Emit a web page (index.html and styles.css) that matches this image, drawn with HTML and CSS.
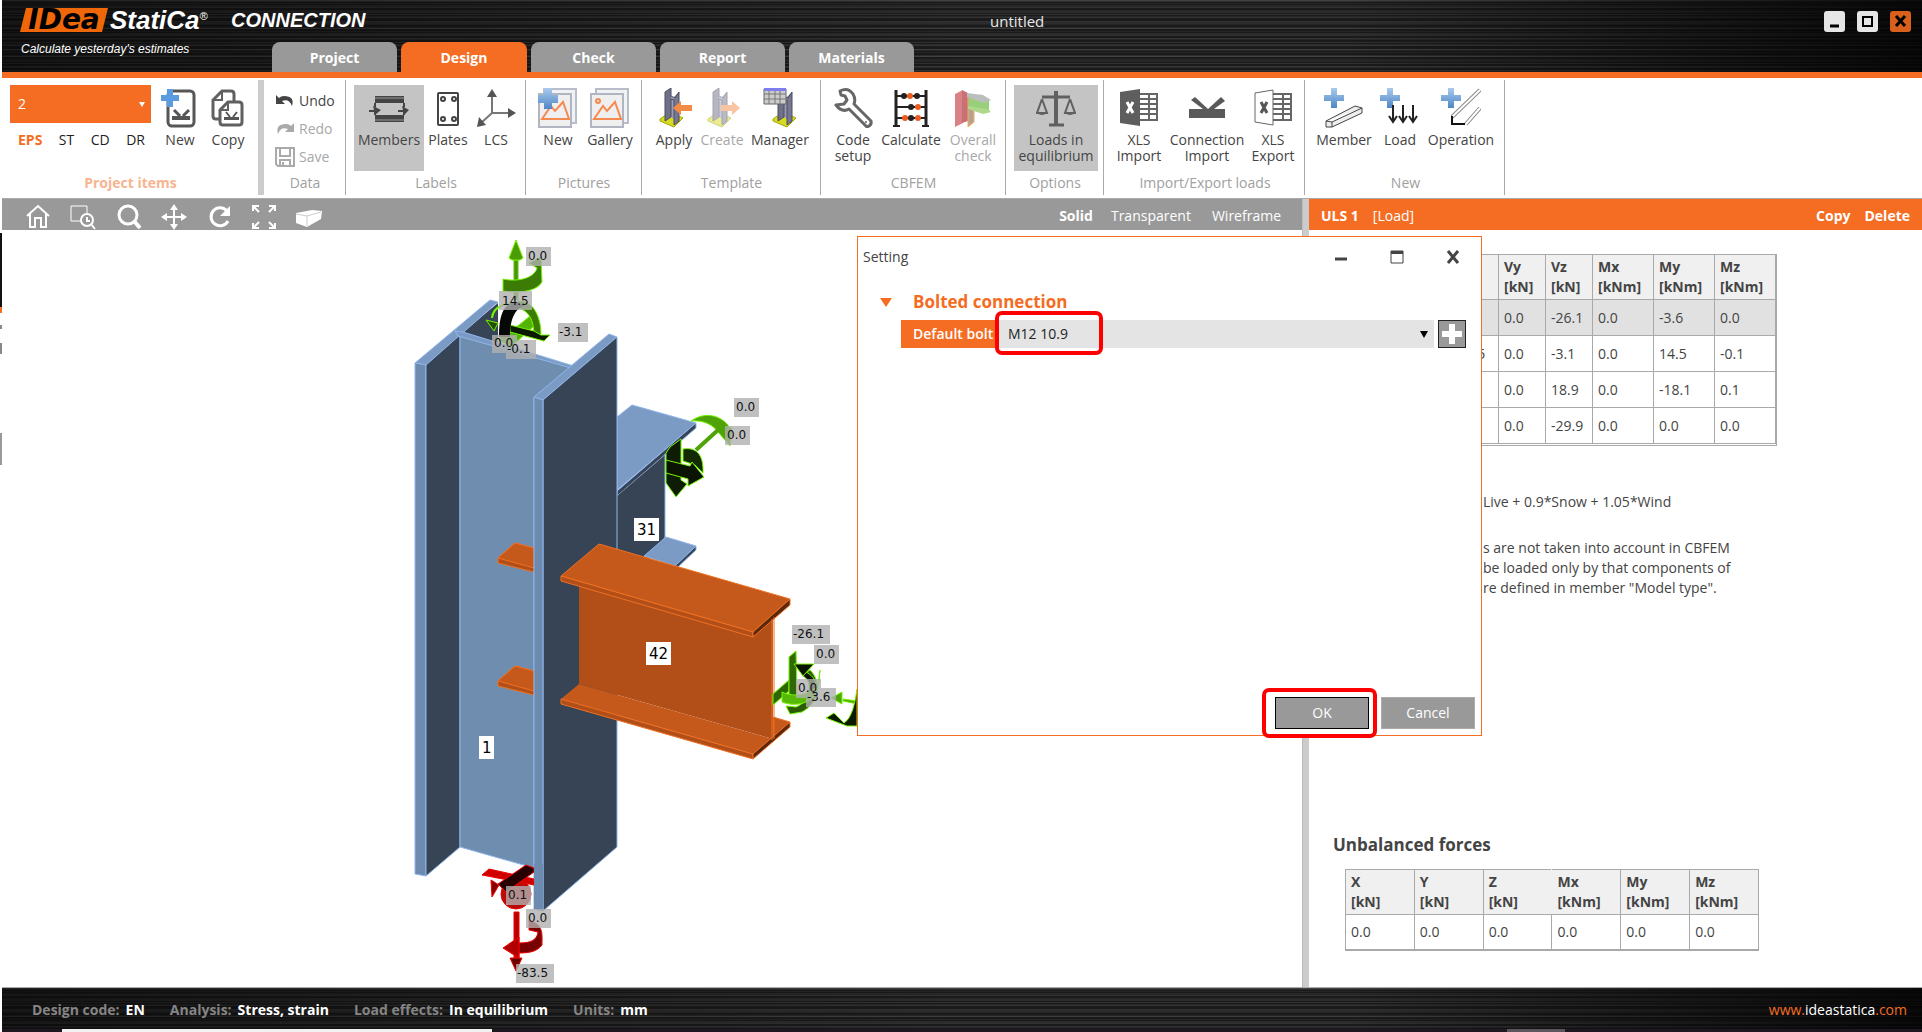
FILE: index.html
```html
<!DOCTYPE html>
<html lang="en">
<head>
<meta charset="utf-8">
<title>untitled</title>
<link rel="stylesheet" href="styles.css">
</head>
<body>
<svg class="defs" aria-hidden="true">
  <defs>
    <linearGradient id="plusFill" x1="0" y1="0" x2="0" y2="1"><stop offset="0" stop-color="#a9cbed"/><stop offset="1" stop-color="#4f86c6"/></linearGradient>
    <symbol id="plus" viewBox="0 0 20 20"><path d="M7 0h6v7h7v6h-7v7H7v-7H0V7h7z" fill="url(#plusFill)"/></symbol>
    <symbol id="photo" viewBox="0 0 40 40"><path d="M6 1h32v34H6z" fill="#f1f2f5" stroke="#b9bdc9" stroke-width="2"/><path d="M1 6h32v33H1z" fill="#efefef" stroke="#b1b5c2" stroke-width="2"/><path d="M4 31 13 18l4 5 8-9 6 17z" fill="none" stroke="#f58a50" stroke-width="2"/></symbol>
    <symbol id="column" viewBox="0 0 40 40"><path d="m6 31 10-7 13 6-9 9-14-6z" fill="#d8da22" stroke="#a5a800"/><path d="m11 4 6-4v29l-6 4z" fill="#6f7087"/><path d="m17 8 4 2v22l-4-3z" fill="#9c9db8"/><path d="m20 9 5-5v29l-5 4z" fill="#777890"/><path d="m11 4 6-4v8l4 2 4-6v29l-5 4V12l-3-1v18l-6 4z" fill="none" stroke="#4c4d62"/></symbol>
    <symbol id="sheet" viewBox="0 0 40 40"><path d="M20 6h18v26H20M20 11h18M20 16h18M20 21h18M20 26h18M30 6v26" fill="none" stroke="#666" stroke-width="2"/></symbol>
  </defs>
</svg>

<div class="app">
  <header class="top">
    <div class="brand">
      <div class="brand-row"><span class="logo"><span>IDea</span></span><span class="name">StatiCa<sup>®</sup></span><span class="product">CONNECTION</span></div>
      <div class="tagline">Calculate yesterday's estimates</div>
    </div>
    <nav class="tabs">
      <button>Project</button><button class="on">Design</button><button>Check</button><button>Report</button><button>Materials</button>
    </nav>
    <h1 class="doc">untitled</h1>
    <div class="winbtns">
      <button aria-label="Minimize"><svg viewBox="0 0 21 21"><path d="M6 15h9" stroke="#000" stroke-width="3"/></svg></button>
      <button aria-label="Maximize"><svg viewBox="0 0 21 21"><path d="M6 6h9v9H6z" fill="none" stroke="#000" stroke-width="2"/></svg></button>
      <button class="x" aria-label="Close"><svg viewBox="0 0 21 21"><path d="m6 5 9 10M15 5 6 15" stroke="#000" stroke-width="3"/></svg></button>
    </div>
  </header>

  <div class="ribbon">
    <section class="group items">
      <div class="row">
        <div class="chooser">
          <label class="combo"><select aria-label="Project item"><option>2</option></select></label>
          <div class="kinds"><button class="on">EPS</button><button>ST</button><button>CD</button><button>DR</button></div>
        </div>
        <button class="tool w48"><svg viewBox="0 0 40 40"><rect x="8" y="3" width="26" height="35" rx="4" fill="#fff" stroke="#565656" stroke-width="3"/><path d="m14 22 6 6M29 22l-6 6" stroke="#555" stroke-width="3"/><path d="M12 28h18v4H12z" fill="#555"/><path d="M7 1h6v6h6v6h-6v6H7v-6H1V7h6z" fill="#5a9ce0"/></svg>New</button>
        <button class="tool w48"><svg viewBox="0 0 40 40"><path d="M12 31H8q-3 0-3-3V12L14 3h9q3 0 3 3v7" fill="#fff" stroke="#606060" stroke-width="3"/><path d="M14 3v9H5" fill="none" stroke="#606060" stroke-width="2"/><path d="m12 22 8-8h11q3 0 3 3v17q0 3-3 3H15q-3 0-3-3z" fill="#fff" stroke="#606060" stroke-width="3"/><path d="M20 14v8h-8" fill="none" stroke="#606060" stroke-width="2"/><path d="m18 24 4 5M29 24l-4 5" stroke="#555" stroke-width="2"/><path d="M16 29h15v3H16z" fill="#555"/></svg>Copy</button>
      </div>
      <h2>Project items</h2>
    </section>
    <section class="group data">
      <div class="stack">
        <button><svg viewBox="0 0 20 16"><path d="M1 2v9h9L7 8q7-3 10 5 3-10-8-10-3 0-5 2z" fill="#444"/></svg>Undo</button>
        <button class="off"><svg viewBox="0 0 20 16"><path d="M19 2v9h-9l3-3Q6 5 3 13 0 3 11 3q3 0 5 2z" fill="#aaa"/></svg>Redo</button>
        <button class="off"><svg viewBox="0 0 20 20"><path d="M1 1h18v18H3l-2-2zM5 1v8h10V1M5 19v-6h10v6M8 15v4" fill="none" stroke="#aaa" stroke-width="2"/></svg>Save</button>
      </div>
      <h2>Data</h2>
    </section>
    <section class="group labels">
      <div class="row">
        <button class="tool w70 pressed"><svg viewBox="0 0 40 40"><path d="M6 8h29v7H6zM6 27h29v7H6z" fill="#444"/><path d="M6 10h29M6 32h29" stroke="#999"/><path d="M6 15v4M6 27v-5M35 15v4M35 27v-5" stroke="#444" stroke-width="2"/><path d="M0 22h5l-1-4 8 4-6 5 0-3-6 0zM29 22h5l-1-4 7 4-5 5 0-3-6 0z" fill="#444"/></svg>Members</button>
        <button class="tool w48"><svg viewBox="0 0 40 40"><rect x="10" y="5" width="20" height="32" rx="1" fill="#fff" stroke="#444" stroke-width="2"/><g fill="none" stroke="#444" stroke-width="2"><circle cx="15" cy="11" r="2"/><circle cx="26" cy="11" r="2"/><circle cx="15" cy="31" r="2"/><circle cx="26" cy="31" r="2"/></g></svg>Plates</button>
        <button class="tool w48"><svg viewBox="0 0 40 40"><path d="M16 6v19h17M16 25 5 35" fill="none" stroke="#777" stroke-width="2"/><path d="m16 1 5 8H11zM40 25l-8 5V20zM1 39l2-10 7 8z" fill="#555"/></svg>LCS</button>
      </div>
      <h2>Labels</h2>
    </section>
    <section class="group pictures">
      <div class="row">
        <button class="tool w48"><svg viewBox="0 0 40 40"><use href="#photo"/><path d="M6 0h8v7h6v8h-6v6H6v-6H0V7h6z" fill="url(#plusFill)"/></svg>New</button>
        <button class="tool w56"><svg viewBox="0 0 40 40"><use href="#photo"/><circle cx="8" cy="13" r="2" fill="none" stroke="#f58a50" stroke-width="2"/></svg>Gallery</button>
      </div>
      <h2>Pictures</h2>
    </section>
    <section class="group template">
      <div class="row">
        <button class="tool w48"><svg viewBox="0 0 40 40"><use href="#column"/><path d="m19 20 8-7v4h11v6H27v4z" fill="#f28b45"/></svg>Apply</button>
        <button class="tool w48 off"><svg class="faded" viewBox="0 0 40 40"><use href="#column"/><path d="m38 20-8-7v4H19v6h11v4z" fill="#f28b45"/></svg>Create</button>
        <button class="tool w68"><svg viewBox="0 0 40 40"><use href="#column" x="7"/><path d="M4 1h22v15H4z" fill="#ccc" stroke="#666"/><path d="M4 6h22M4 11h22M9 3v13M15 3v13M20 3v13" stroke="#777"/><path d="M4 0h22v3H4z" fill="#7e7ef0"/></svg>Manager</button>
      </div>
      <h2>Template</h2>
    </section>
    <section class="group cbfem">
      <div class="row">
        <button class="tool w48"><svg viewBox="0 0 40 40"><path d="M7 3q8-4 13 3 3 5 1 10l17 17q1 4-4 6L16 21q-7 4-13-4l8-1 3-4-2-4-4-1z" fill="#fff" stroke="#666" stroke-width="3" stroke-linejoin="round"/><circle cx="33" cy="34" r="1" fill="#666"/></svg>Code<br>setup</button>
        <button class="tool w68"><svg viewBox="0 0 40 40"><path d="M5 2v36M35 2v36" stroke="#222" stroke-width="3"/><path d="M2 38h7M31 38h7M5 8h30M5 19h30M5 30h30" stroke="#222" stroke-width="2"/><g fill="#222"><circle cx="13" cy="8" r="3"/><circle cx="26" cy="8" r="3"/><circle cx="20" cy="19" r="3"/><circle cx="20" cy="30" r="3"/></g><g fill="#ee5b1e"><circle cx="19" cy="8" r="3"/><circle cx="27" cy="19" r="3"/><circle cx="14" cy="30" r="3"/><circle cx="27" cy="30" r="3"/></g></svg>Calculate</button>
        <button class="tool w56 off"><svg viewBox="0 0 40 40"><path d="m2 6 8-4v33l-8 4z" fill="#d98186"/><path d="m9 2 6 3v28l-6 2z" fill="#c96f76"/><path d="m15 8 6 3v23l-6 5z" fill="#b7a091" stroke="#e8b25c"/><path d="m16 10 15 4 5-2v10l-5 3-15-6z" fill="#98cf7b"/><path d="m14 5 16 2 8 5-7 3-17-6z" fill="#b9bfbd"/><path d="m15 18 20 3 3 3-8 2-15-5z" fill="#add88a"/></svg>Overall<br>check</button>
      </div>
      <h2>CBFEM</h2>
    </section>
    <section class="group options">
      <div class="row">
        <button class="tool w84 pressed"><svg viewBox="0 0 40 40"><path d="M20 3v34" stroke="#606060" stroke-width="4"/><path d="M6 9h28M13 37h15" stroke="#606060" stroke-width="3"/><path d="m6 11-5 14h10L6 11M34 11l-5 14h10l-5-14" fill="none" stroke="#606060" stroke-width="2"/><path d="M1 25h10q-5 4-10 0M29 25h10q-5 4-10 0" fill="#606060"/></svg>Loads in<br>equilibrium</button>
      </div>
      <h2>Options</h2>
    </section>
    <section class="group transfer">
      <div class="row">
        <button class="tool w52"><svg viewBox="0 0 40 40"><use href="#sheet"/><path d="m1 4 20-3v37L1 35z" fill="#5e5e5e"/><path d="m8 14 6 11M14 14 8 25" stroke="#fff" stroke-width="3"/></svg>XLS<br>Import</button>
        <button class="tool w84"><svg viewBox="0 0 40 40"><path d="M2 21h14L4 12l4-3 13 12L34 9l4 4-11 8h11v9H2z" fill="#595959"/></svg>Connection<br>Import</button>
        <button class="tool w48"><svg viewBox="0 0 40 40"><use href="#sheet"/><path d="m2 5 18-3v35L2 34z" fill="#fff" stroke="#666"/><path d="m8 14 6 11M14 14 8 25" stroke="#555" stroke-width="3"/></svg>XLS<br>Export</button>
      </div>
      <h2>Import/Export loads</h2>
    </section>
    <section class="group create">
      <div class="row">
        <button class="tool w60"><svg viewBox="0 0 40 40"><use href="#plus" width="20" height="20"/><path d="m2 33 29-15 7 2v5L8 39H2zM2 33l6 1 30-14M8 34v5" fill="#eee" stroke="#444"/></svg>Member</button>
        <button class="tool w52"><svg viewBox="0 0 40 40"><use href="#plus" width="20" height="20"/><path d="M13 17v17M23 17v17M33 17v17M9 28l4 6 4-6M19 28l4 6 4-6M29 28l4 6 4-6" fill="none" stroke="#222" stroke-width="2"/></svg>Load</button>
        <button class="tool w70"><svg viewBox="0 0 40 40"><use href="#plus" width="20" height="20"/><path d="M39 2 11 29M39 20 25 36" stroke="#888" stroke-width="4"/><path d="M39 2 11 29M39 20 25 36" stroke="#fff" stroke-width="2"/><path d="M11 28v8h13" fill="none" stroke="#111" stroke-width="2"/></svg>Operation</button>
      </div>
      <h2>New</h2>
    </section>
  </div>

  <main class="work">
    <section class="scene">
      <div class="viewbar">
        <div class="viewtools">
          <button aria-label="Home"><svg viewBox="0 0 28 28"><path d="m3 14 11-10 11 10M6 12v13h5v-9h6v9h5V12" fill="none" stroke="#fff" stroke-width="2"/></svg></button>
          <button aria-label="Zoom window"><svg viewBox="0 0 28 28"><path d="M12 19H2V4h16v7" fill="none" stroke="#fff" stroke-width="1"/><circle cx="18" cy="18" r="6" fill="none" stroke="#fff" stroke-width="2"/><path d="m22 22 4 5M18 15v4h3" fill="none" stroke="#fff" stroke-width="2"/></svg></button>
          <button aria-label="Zoom"><svg viewBox="0 0 28 28"><circle cx="14" cy="13" r="9" fill="none" stroke="#fff" stroke-width="3"/><path d="m20 19 6 7" stroke="#fff" stroke-width="4"/></svg></button>
          <button aria-label="Pan"><svg viewBox="0 0 28 28"><path d="M15 5v19M6 15h18" stroke="#fff" stroke-width="2"/><path d="m15 2 4 6h-8zM15 28l4-6h-8zM2 15l6-4v8zM28 15l-6-4v8z" fill="#fff"/></svg></button>
          <button aria-label="Rotate"><svg viewBox="0 0 28 28"><path d="M23 9a9 9 0 1 0 1 10" fill="none" stroke="#fff" stroke-width="3"/><path d="M26 4v10H16z" fill="#fff"/></svg></button>
          <button aria-label="Fit"><svg viewBox="0 0 28 28"><path d="M4 9V4h6M4 4l6 6M26 9V4h-6M26 4l-6 6M4 21v5h6M4 26l6-6M26 21v5h-6M26 26l-6-6" fill="none" stroke="#fff" stroke-width="2"/></svg></button>
          <button aria-label="Solid view"><svg viewBox="0 0 28 28"><path d="m2 11 16-3 10 1-1 8-14 8-11-4z" fill="#fff"/><path d="m2 12 11 2v10M13 14l14-4" fill="none" stroke="#ccc"/></svg></button>
        </div>
        <div class="modes"><button class="on">Solid</button><button>Transparent</button><button>Wireframe</button></div>
      </div>
      <svg class="model" viewBox="2 230 1300 757" role="img" aria-label="3D model of the joint">
        <g stroke="#8fb5ea" stroke-linejoin="round">
          <path d="m460 334 38-31v60l-38-20z" fill="#364456" stroke="none"/>
          <path d="m415 363 75-63 8 2-72 63z" fill="#7b9bc4"/>
          <path d="m415 363 11 2v511l-11-2z" fill="#6c8baf"/>
          <path d="m426 365 34-30v512l-34 29z" fill="#364456"/>
          <path d="m460 336 118 32-44 30v470l-74-21z" fill="#6f8daf"/>
          <path d="m455 331 8 1 114 35-6 1-113-32z" fill="#7b9bc4"/>
          <path d="m534 397 75-63 8 3-74 63z" fill="#7b9bc4"/>
          <path d="m617 417 15-12 64 18-79 67z" fill="#7b9bc4"/>
          <path d="m617 491 79-68v5l-79 68z" fill="#364456"/>
          <path d="m617 496 48-41v82l-30 43h-18z" fill="#364456" stroke="none"/>
          <path d="M665 454v83" fill="none"/>
          <path d="m644 556 22-19 30 9-21 20z" fill="#7b9bc4"/>
          <path d="m675 566 21-20v4l-18 17z" fill="#364456"/>
        </g>
        <g stroke="#f07022" stroke-linejoin="round">
          <path d="m498 558 17-15 19 5v24l-36-9z" fill="#b24f18"/><path d="m498 558 17-15 19 5v20z" fill="#c5591b"/>
          <path d="m498 681 17-15 19 5v24l-36-9z" fill="#b24f18"/><path d="m498 681 17-15 19 5v20z" fill="#c5591b"/>
        </g>
        <g stroke="#8fb5ea" stroke-linejoin="round">
          <path d="m543 400 74-63v510l-74 64z" fill="#364456"/>
          <path d="m534 397 9 3v511l-9-2z" fill="#6c8baf"/>
        </g>
        <g stroke="#f07022" stroke-linejoin="round">
          <path d="m773 717 17 5-17 17z" fill="#c5591b"/>
          <path d="M579 580v104l194 55V610z" fill="#b24f18" stroke="none"/>
          <path d="m561 699 18-15 194 55-20 15z" fill="#c5591b" stroke="none"/>
          <path d="m561 699 192 55v5l-192-55z" fill="#b24f18"/>
          <path d="m753 754 37-32v5l-37 32z" fill="#5a280c"/>
          <path d="m561 576 38-32 191 55-37 33z" fill="#c5591b"/>
          <path d="m561 576 192 56v5l-192-56z" fill="#b24f18"/>
          <path d="m753 632 37-33v6l-37 32z" fill="#5a280c"/>
          <path d="M772 619v121M774 617v122" fill="none"/>
        </g>
        <g stroke="#74f500" stroke-linejoin="round">
          <path d="M514 260h4v40h-4z" fill="#4b9605" stroke="#5ec000"/>
          <path d="m516 240 7 18-3 2h-8l-3-2z" fill="#4c9c08"/>
          <path d="M503 279c13 3 31 0 34-11l-8-5 12-6 1 25c-6 11-28 11-39 9z" fill="#3c7c05"/>
          <path d="m519 325 11-9 4 10-22 20-15-6z" fill="#54b406"/>
          <path d="M518 301c17-1 23 19 23 33l-7 2c0-21-9-26-16-28z" fill="#3c7c05"/>
          <path d="m486 320 12 3-4 8z" fill="#254d03"/><path d="M492 318c1-12 14-16 30-14" fill="none" stroke-width="2"/>
          <path d="m510 325 24 6 7 4 9 0-6 6-34-9z" fill="#0d1a02"/>
          <path d="M499 337c0-27 7-35 19-35l6 4c-12 4-14 19-14 31z" fill="#050805" stroke="none"/>
          <path d="M691 421c14-10 31-6 39 7l2-1-2 19-12-14c-6-8-15-12-27-11z" fill="#4fa308"/>
          <path d="m696 450 22-20" stroke="#4fa308" stroke-width="4"/>
          <path d="m670 447 11-8v41l6 4-11 13-10-14v-30z" fill="#0d1c02"/>
          <path d="M683 449c12-2 21 4 20 24l-8-8-12-4z" fill="#142a02"/>
          <path d="m666 460 24 6 2-4 12 15-16 9 0-7-22-6z" fill="#0b1403"/>
          <path d="m773 694 16-14v11l-16 14z" fill="#2e6604"/>
          <path d="m789 657 7-6 1 46h-8z" fill="#2f6804"/>
          <path d="m786 706 4 8 12-2c18-10 20-30 8-42l-6 4c9 10 7 27-8 33z" fill="#2b5b04"/>
          <path d="M806 672c12 6 11 17 8 25l-7-3c4-6 3-14-4-18z" fill="#0b1403"/>
          <path d="m794 664 20 0-11 12z" fill="#0b1403"/>
          <path d="M782 692c13 6 30 3 37-9l1-13-3 22c-8 14-25 14-35 10z" fill="#58b807"/>
          <path d="m831 698 11-6v12zM843 699l14 2v3l-14-3z" fill="#4fa308"/>
          <path d="m826 718 8-5 10 10c8-5 11-20 13-34v37l-10 0z" fill="#0d1a02"/>
        </g>
        <g stroke="#f00000" stroke-linejoin="round">
          <circle cx="516" cy="894" r="15" fill="#b80c0c"/>
          <path d="m482 875 7-6 45 10v6z" fill="#d00000"/><path d="m491 880 8 5-7 12z" fill="#800"/>
          <path d="m498 884 28-19 8 3v4l-28 20z" fill="#260000"/>
          <path d="M514 912h5v48h-5z" fill="#b40000"/><path d="m510 958h12l-6 13z" fill="#6b0000"/>
          <path d="M519 943c12 0 18-3 19-11l-9-2v-10c15 5 13 14 13 25-5 7-14 8-23 8z" fill="#700"/>
          <path d="m503 948 16-11v21z" fill="#b00000"/>
        </g>
        <path d="M534 864v45l9 2V864z" fill="#6c8baf"/>
        <g fill="#b0b0b0" fill-opacity=".8">
          <path d="M526 247h25v19h-25zM499 291h33v19h-33zM558 323h30v19h-30zM492 335h25v18h-25zM506 340h30v19h-30zM734 398h25v19h-25zM725 426h25v19h-25zM792 625h38v19h-38zM814 645h25v19h-25zM796 679h25v19h-25zM806 688h30v19h-30zM506 886h25v19h-25zM526 909h25v19h-25zM516 964h38v19h-38z"/>
        </g>
        <path d="M634 518h25v23h-25zM646 642h25v23h-25zM479 736h15v23h-15z" fill="#fff"/>
        <g class="force">
          <text x="528" y="260">0.0</text><text x="502" y="305">14.5</text><text x="559" y="336">-3.1</text><text x="494" y="347">0.0</text><text x="507" y="353">-0.1</text><text x="736" y="411">0.0</text><text x="727" y="439">0.0</text><text x="793" y="638">-26.1</text><text x="816" y="658">0.0</text><text x="798" y="692">0.0</text><text x="807" y="701">-3.6</text><text x="508" y="899">0.1</text><text x="528" y="922">0.0</text><text x="517" y="977">-83.5</text>
        </g>
        <g class="member"><text x="637" y="535">31</text><text x="649" y="659">42</text><text x="482" y="753">1</text></g>
      </svg>
    </section>
    <div class="splitter"></div>
    <aside class="panel">
      <div class="panelbar"><strong>ULS 1</strong><span>[Load]</span><button class="copy">Copy</button><button>Delete</button></div>
      <div class="panelbody">
        <div class="loads">
          <table>
            <thead><tr><th></th><th></th><th>Vy<br>[kN]</th><th>Vz<br>[kN]</th><th>Mx<br>[kNm]</th><th>My<br>[kNm]</th><th>Mz<br>[kNm]</th></tr></thead>
            <tbody>
              <tr class="sel"><td></td><td></td><td>0.0</td><td>-26.1</td><td>0.0</td><td>-3.6</td><td>0.0</td></tr>
              <tr><td></td><td>-83.5</td><td>0.0</td><td>-3.1</td><td>0.0</td><td>14.5</td><td>-0.1</td></tr>
              <tr><td></td><td></td><td>0.0</td><td>18.9</td><td>0.0</td><td>-18.1</td><td>0.1</td></tr>
              <tr><td></td><td></td><td>0.0</td><td>-29.9</td><td>0.0</td><td>0.0</td><td>0.0</td></tr>
            </tbody>
          </table>
        </div>
        <div class="notes">
          <p>Live + 0.9*Snow + 1.05*Wind</p>
          <p>s are not taken into account in CBFEM<br>be loaded only by that components of<br>re defined in member "Model type".</p>
        </div>
        <h3>Unbalanced forces</h3>
        <table class="sums">
          <thead><tr><th>X<br>[kN]</th><th>Y<br>[kN]</th><th class="open-end">Z<br>[kN]</th><th class="open-start">Mx<br>[kNm]</th><th>My<br>[kNm]</th><th>Mz<br>[kNm]</th></tr></thead>
          <tbody><tr><td>0.0</td><td>0.0</td><td>0.0</td><td>0.0</td><td>0.0</td><td>0.0</td></tr></tbody>
        </table>
      </div>
    </aside>
  </main>

  <footer class="status">
    <dl>
      <div><dt>Design code:</dt><dd>EN</dd></div>
      <div><dt>Analysis:</dt><dd>Stress, strain</dd></div>
      <div><dt>Load effects:</dt><dd>In equilibrium</dd></div>
      <div><dt>Units:</dt><dd>mm</dd></div>
    </dl>
    <a href="#">www.<span>ideastatica</span>.com</a>
  </footer>
  <div class="taskbar"><i class="light"></i><i class="gray"></i></div>
</div>

<div class="dialog" role="dialog" aria-label="Setting">
  <div class="titlebar"><span>Setting</span>
    <button aria-label="Minimize"><svg viewBox="0 0 16 16"><path d="M2 10h12" stroke="#444" stroke-width="3"/></svg></button>
    <button aria-label="Maximize"><svg viewBox="0 0 16 16"><path d="M2 2h12v12H2z" fill="none" stroke="#444"/><path d="M2 2h12v3H2z" fill="#444"/></svg></button>
    <button aria-label="Close"><svg viewBox="0 0 16 16"><path d="m3 2 10 12M13 2 3 14" stroke="#444" stroke-width="3"/></svg></button>
  </div>
  <div class="settings">
    <h2>Bolted connection</h2>
    <div class="field">
      <label for="bolt">Default bolt</label>
      <div class="select"><select id="bolt"><option>M12 10.9</option></select></div>
      <button aria-label="Add bolt"><svg viewBox="0 0 24 24"><path d="M9 2h6v7h7v6h-7v7H9v-7H2V9h7z" fill="#fff"/></svg></button>
    </div>
  </div>
  <div class="actions"><button class="ok">OK</button><button>Cancel</button></div>
  <div class="mark mark-bolt"></div>
  <div class="mark mark-ok"></div>
</div>
<div class="behind"></div>
</body>
</html>
```
FILE: styles.css
```css
* { box-sizing: border-box; }
body { margin: 0; font: 14px/16px "Open Sans", "Noto Sans", sans-serif; color: #444; background: #fff; }
button { border: 0; padding: 0; margin: 0; background: none; font: inherit; color: inherit; }
h1, h2, h3, p, dl, dd { margin: 0; }
h1, h2, h3 { font-weight: 400; font-size: 14px; }
svg { display: block; flex: none; }
.defs { position: absolute; width: 0; height: 0; }
.app { display: flex; flex-direction: column; min-height: 100vh; padding-left: 2px; }

/* brushed metal bars */
.top, .status {
  background-color: #1a1a1a;
  background-image:
    linear-gradient(90deg, rgba(0,0,0,.5), rgba(0,0,0,0) 50%, rgba(0,0,0,0) 70%, rgba(0,0,0,.8)),
    repeating-linear-gradient(180deg, rgba(255,255,255,.1) 0 1px, transparent 1px 3px, rgba(255,255,255,.05) 3px 4px, transparent 4px 7px),
    repeating-linear-gradient(180deg, rgba(255,255,255,.08) 0 2px, transparent 2px 5px, rgba(255,255,255,.06) 5px 7px, transparent 7px 11px);
}
.top { display: flex; height: 78px; border-bottom: 6px solid #f46d22; color: #fff; }
.brand { flex: none; width: 270px; padding: 6px 0 0 21px; white-space: nowrap; }
.brand-row { display: flex; align-items: center; height: 28px; font-family: "Liberation Sans", sans-serif; font-style: italic; }
.logo { flex: none; position: relative; width: 82px; height: 24px; color: #000; }
.logo::before { content: ""; position: absolute; inset: 0; background: #ef6708; transform: skewX(-14deg); }
.logo span { position: relative; display: block; text-align: center; font: italic bold 28px/24px "DejaVu Sans", sans-serif; }
.name { flex: none; width: 126px; padding-left: 5px; font-weight: bold; font-size: 26px; }
.name sup { font-size: 11px; font-weight: 400; vertical-align: 9px; line-height: 0; }
.product { font-size: 20px; font-weight: bold; }
.tagline { margin: 7px 0 0 -2px; font: italic 12px/16px "Liberation Sans", sans-serif; }
.tabs { display: flex; gap: 4px; align-items: flex-end; }
.tabs button { width: 125px; height: 30px; padding-top: 1px; border-radius: 8px 8px 0 0; background: #999; font-weight: 700; }
.tabs .on { background: #f46d22; width: 126px; }
.doc { margin: 12px auto 0 76px; color: #e8e8e8; line-height: 18px; font-size: 15px; }
.winbtns { display: flex; gap: 12px; padding: 11px 11px 0 0; }
.winbtns button { width: 21px; height: 21px; border-radius: 3px; background: #e6e6e6; }
.winbtns .x { background: #d9601c; }

.ribbon { display: flex; height: 121px; padding: 2px 0 3px; border-bottom: 1px solid #aaa; }
.group { display: flex; flex-direction: column; justify-content: space-between; padding: 5px 0 1px 8px; border-right: 1px solid #aaa; height: 115px; }
.group h2 { height: 20px; line-height: 18px; margin-left: -7px; text-align: center; color: #a0a0a0; }
.row { display: flex; }
.items { width: 262px; border-right: 6px solid #ccc; }
.items h2 { color: #f7b48f; font-weight: 700; }
.data { width: 82px; }
.labels { width: 180px; }
.pictures { width: 116px; }
.template { width: 179px; }
.cbfem { width: 185px; }
.options { width: 98px; }
.transfer { width: 201px; padding-left: 9px; }
.create { width: 200px; padding-left: 9px; }
.tool { display: flex; flex-direction: column; align-items: center; height: 86px; padding-top: 3px; white-space: nowrap; }
.tool svg { width: 40px; height: 40px; margin-bottom: 4px; }
.w48 { width: 48px; } .w52 { width: 52px; } .w56 { width: 56px; } .w60 { width: 60px; }
.w68 { width: 68px; } .w70 { width: 70px; } .w84 { width: 84px; }
.tool.pressed { background: #c4c4c4; }
.off { color: #a8a8a8; }
.faded { opacity: .5; }
.chooser { width: 141px; margin-right: 5px; }
.combo { position: relative; display: block; height: 38px; }
.combo select { width: 100%; height: 100%; padding-left: 8px; appearance: none; border: 0; background: #f46d22; color: #fff; font: inherit; }
.combo::after { content: ""; position: absolute; right: 6px; top: 17px; border: 3px solid transparent; border-top: 5px solid #fff; border-bottom: 0; }
.kinds { display: flex; justify-content: space-between; padding: 9px 6px 0 8px; color: #222; }
.kinds .on { color: #f46d22; font-weight: 700; }
.stack { display: flex; flex-direction: column; gap: 4px; padding-top: 4px; }
.stack button { display: flex; align-items: center; gap: 4px; height: 24px; padding-left: 3px; }
.stack svg { width: 20px; height: 20px; }

.work { display: flex; flex: 1; border-bottom: 1px solid #aaa; }
.scene { flex: 1; display: flex; flex-direction: column; min-width: 0; }
.viewbar { display: flex; justify-content: space-between; align-items: center; height: 31px; padding: 2px 21px 0 22px; background: #999; color: #fff; }
.viewtools { display: flex; gap: 17px; }
.viewtools svg { width: 28px; height: 28px; }
.modes { display: flex; gap: 18px; }
.modes button:last-child { margin-left: 3px; }
.modes .on { font-weight: 700; }
.model { width: 100%; flex: 1; min-height: 0; }
.force { font: 12px "DejaVu Sans", sans-serif; fill: #111; }
.member { font: 15px "DejaVu Sans", sans-serif; fill: #000; }
.splitter { width: 7px; background: #ccc; border-left: 1px solid #bbb; }
.panel { display: flex; flex-direction: column; flex: 0 0 613px; }
.panelbar { display: flex; align-items: center; height: 31px; padding: 2px 12px 0; background: #f46d22; color: #fff; gap: 14px; }
.panelbar button, .panelbar strong { font-weight: 700; }
.panelbar .copy { margin-left: auto; }
.panelbody { flex: 1; display: flex; flex-direction: column; align-items: flex-start; padding: 24px 25px 36px 24px; }
table { border-collapse: collapse; table-layout: fixed; }
th, td { border: 1px solid #a9a9a9; padding: 0 5px; text-align: left; white-space: nowrap; }
th { height: 45px; background: #f0f0f0; font-weight: 700; line-height: 20px; }
td { height: 36px; }
.sel td { background: #e1e1e1; }
.loads { margin-left: 12px; border: 1px solid #a9a9a9; border-width: 0 1px 1px 0; padding-bottom: 1px; }
.loads table { width: 431px; }
.loads th:nth-child(1) { width: 102px; }
.loads th:nth-child(2) { width: 51px; }
.loads th:nth-child(3), .loads th:nth-child(4) { width: 47px; }
.notes { padding: 46px 0 0 150px; line-height: 20px; }
.notes p + p { margin-top: 26px; }
.panelbody h3 { margin: auto 0 14px; font-size: 17px; font-weight: 700; line-height: 20px; }
.sums { width: 414px; margin-left: 12px; border-bottom: 2px solid #a9a9a9; }
.open-end { border-right-color: #f0f0f0; }
.open-start { border-left-color: #f0f0f0; }

.status { display: flex; justify-content: space-between; align-items: center; height: 41px; padding: 2px 15px 0 30px; color: #fff; }
.status dl, .status dl div { display: flex; }
.status dl { gap: 25px; font-weight: 700; }
.status dl div { gap: 6px; }
.status dt { color: #858585; }
.status a { color: #f46d22; text-decoration: none; }
.status a span { color: #fff; }
.taskbar { display: flex; justify-content: space-between; height: 3px; padding: 0 357px 0 60px; background: #1f1822; }
.light { width: 430px; background: #f2f2f2; }
.gray { width: 58px; background: #5a565c; }

/* sliver of the window underneath, at the left edge */
.behind { position: absolute; left: 0; top: 233px; width: 2px; height: 232px; background: linear-gradient(#111 74px, #f46d22 74px 80px, #fff 80px 92px, #888 92px 96px, #fff 96px 110px, #888 110px 121px, #fff 121px 200px, #999 200px); }

.dialog { position: absolute; left: 857px; top: 236px; width: 625px; height: 500px; display: flex; flex-direction: column; border: 1px solid #f46d22; background: #fff; }
.titlebar { display: flex; align-items: center; gap: 40px; height: 40px; padding: 0 20px 0 5px; }
.titlebar span { margin-right: auto; }
.titlebar svg { width: 16px; height: 16px; }
.settings { flex: 1; padding: 15px 15px 0 43px; }
.settings h2 { display: flex; align-items: center; margin-left: -21px; gap: 21px; height: 20px; color: #f46d22; font-size: 17px; font-weight: 700; }
.settings h2::before { content: ""; border: 6px solid transparent; border-top: 9px solid #f46d22; border-bottom: 0; }
.field { display: flex; height: 28px; margin-top: 8px; }
.field label { width: 98px; padding-left: 12px; line-height: 28px; background: #f46d22; color: #fff; font-weight: 600; white-space: nowrap; }
.select { position: relative; flex: 1; margin-right: 4px; }
.select select { width: 100%; height: 28px; padding: 0 9px; appearance: none; border: 0; background: #e4e4e4; color: #222; font: inherit; }
.select::after { content: ""; position: absolute; right: 6px; top: 11px; border: 4px solid transparent; border-top: 7px solid #000; border-bottom: 0; }
.field button { width: 28px; padding: 1px; border: 1px solid #222; background: #999; }
.actions { display: flex; justify-content: flex-end; gap: 12px; padding: 0 6px 6px; }
.actions button { width: 94px; height: 32px; border: 1px solid #aaa; background: #999; color: #fff; }
.actions .ok { border-color: #000; }
.mark { position: absolute; border: 4px solid #f00; border-radius: 7px; pointer-events: none; }
.mark-bolt { left: 137px; top: 74px; width: 108px; height: 44px; }
.mark-ok { left: 404px; top: 451px; width: 115px; height: 50px; }
```
